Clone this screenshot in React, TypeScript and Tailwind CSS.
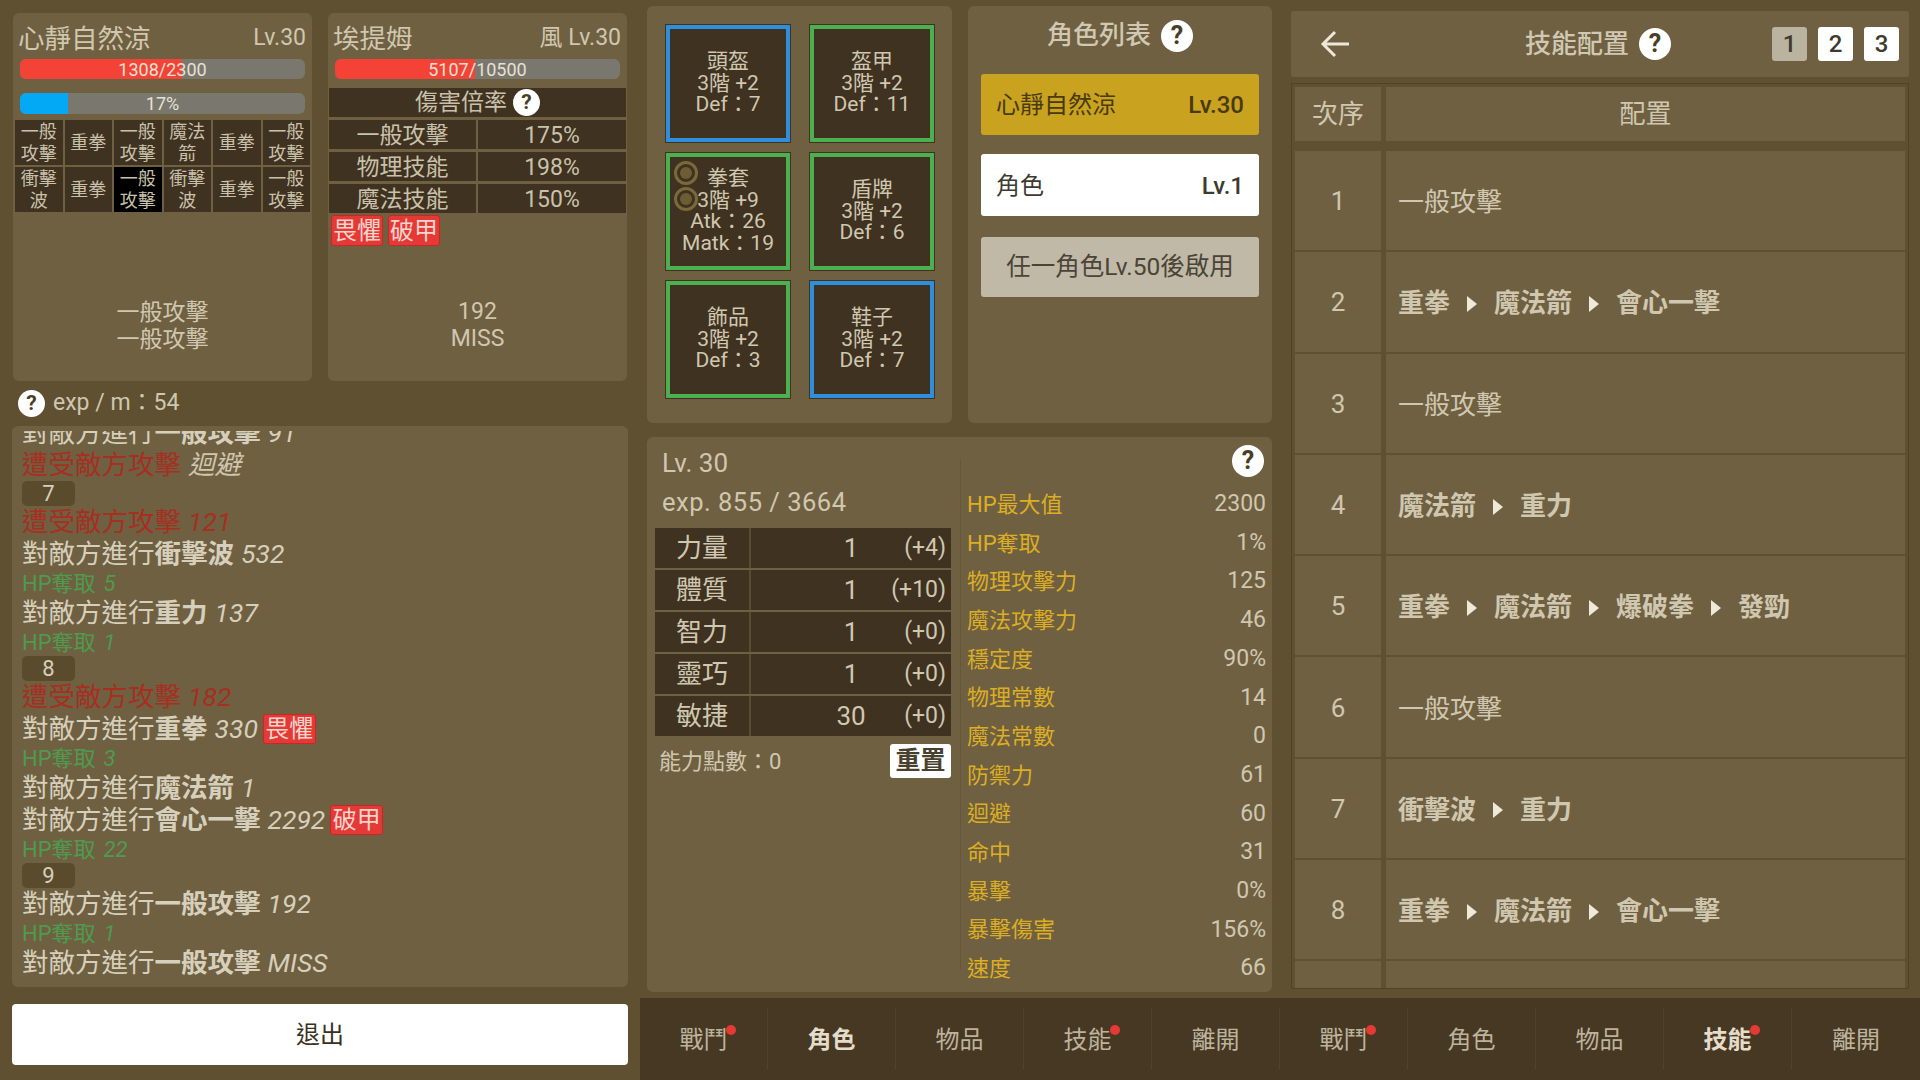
import React from "react";

const skillCells = [
  "一般攻擊", "重拳", "一般攻擊", "魔法箭", "重拳", "一般攻擊",
  "衝擊波", "重拳", "一般攻擊", "衝擊波", "重拳", "一般攻擊",
];

const attrs = [
  ["力量", "1", "(+4)"],
  ["體質", "1", "(+10)"],
  ["智力", "1", "(+0)"],
  ["靈巧", "1", "(+0)"],
  ["敏捷", "30", "(+0)"],
];

const stats = [
  ["HP最大值", "2300"], ["HP奪取", "1%"], ["物理攻擊力", "125"], ["魔法攻擊力", "46"],
  ["穩定度", "90%"], ["物理常數", "14"], ["魔法常數", "0"], ["防禦力", "61"],
  ["迴避", "60"], ["命中", "31"], ["暴擊", "0%"], ["暴擊傷害", "156%"], ["速度", "66"],
];

const skillRows = [
  ["一般攻擊"],
  ["重拳", "魔法箭", "會心一擊"],
  ["一般攻擊"],
  ["魔法箭", "重力"],
  ["重拳", "魔法箭", "爆破拳", "發勁"],
  ["一般攻擊"],
  ["衝擊波", "重力"],
  ["重拳", "魔法箭", "會心一擊"],
];

const gear = [
  { blue: true, lines: ["頭盔", "3階 +2", "Def：7"] },
  { blue: false, lines: ["盔甲", "3階 +2", "Def：11"] },
  { blue: false, lines: ["拳套", "3階 +9", "Atk：26", "Matk：19"], rings: true },
  { blue: false, lines: ["盾牌", "3階 +2", "Def：6"] },
  { blue: false, lines: ["飾品", "3階 +2", "Def：3"] },
  { blue: true, lines: ["鞋子", "3階 +2", "Def：7"] },
];

function Help({ size = "w-8 h-8 text-[25px]" }: { size?: string }) {
  return (
    <span className={`${size} inline-flex items-center justify-center rounded-full bg-white text-[#4a3d24] font-bold shrink-0`}>?</span>
  );
}

function Badge({ text }: { text: string }) {
  return (
    <span className="inline-flex items-center justify-center w-[52px] h-[31px] rounded-[3px] bg-[#e53935] border border-[#c62828] text-[#f6d5cd] text-[24px] leading-none">
      {text}
    </span>
  );
}

function Bar({ pct, color, label, h }: { pct: number; color: string; label: string; h: string }) {
  return (
    <div className={`relative ${h} w-[285px] mx-auto rounded-[6px] bg-[#7a776f] overflow-hidden`}>
      <div className={`h-full ${color}`} style={{ width: `${pct}%` }} />
      <div className="absolute inset-0 flex items-center justify-center text-[18px] text-[#e6e1d3]">{label}</div>
    </div>
  );
}

function White({ skill, val, badge }: { skill: string; val: string; badge?: string }) {
  return (
    <div className="h-[32px] flex items-center text-[26.5px] text-[#d6cfbc] whitespace-nowrap">
      對敵方進行<span className="font-bold">{skill}</span>
      <span className="italic text-[26.5px] ml-[7px]">{val}</span>
      {badge && <span className="ml-[5px] inline-flex"><span className="inline-flex items-center justify-center w-[53px] h-[30px] rounded-[3px] bg-[#e53935] border border-[#c62828] text-[#f6d5cd] text-[24px] leading-none">{badge}</span></span>}
    </div>
  );
}

function Hit({ val, light }: { val: string; light?: boolean }) {
  return (
    <div className="h-[32px] flex items-center text-[26.5px] text-[#a62f22] whitespace-nowrap">
      遭受敵方攻擊<span className={`italic text-[26.5px] ml-[7px] ${light ? "text-[#cfc7b0]" : ""}`}>{val}</span>
    </div>
  );
}

function Drain({ val }: { val: string }) {
  return <div className="h-[27px] flex items-center text-[22px] text-[#4f9a4f] whitespace-nowrap">HP奪取<span className="italic ml-[8px]">{val}</span></div>;
}

function Turn({ n }: { n: string }) {
  return (
    <div className="h-[29px] flex items-center">
      <span className="w-[53px] h-[25px] rounded-[5px] bg-[#5a4b2d] flex items-center justify-center text-[22px] text-[#d6cfbc]">{n}</span>
    </div>
  );
}

function Tab({ label, active, dot, last }: { label: string; active?: boolean; dot?: boolean; last?: boolean }) {
  return (
    <div className="w-[128px] h-full flex items-center justify-center">
      <div className={`w-full h-[62px] flex items-center justify-center pt-[2px] ${last ? "" : "border-r border-[#524229]"}`}>
        <span className={`relative text-[24px] ${active ? "font-bold text-[#e4ddca]" : "text-[#bcb39d]"}`}>
          {label}
          {dot && <span className="absolute top-[3px] -right-[8px] w-[10px] h-[10px] rounded-full bg-[#e53935]" />}
        </span>
      </div>
    </div>
  );
}

export default function App() {
  return (
    <div className="w-[1920px] h-[1080px] flex overflow-hidden bg-[#5f5031] text-[#d6cfbc] [font-family:Roboto,'Noto_Sans_CJK_TC',sans-serif]">
      {/* left column */}
      <div className="w-[640px] px-[12px] pt-[13px] shrink-0">
        <div className="flex gap-[16px] h-[368px] pl-[1px]">
          <div className="w-[299px] rounded-[6px] bg-[#6f6041] flex flex-col">
            <div className="h-[46px] flex items-center justify-between pl-[5px] pr-[6px] pt-[5px]">
              <span className="text-[26.5px] text-[#cfc7b0]">心靜自然涼</span>
              <span className="text-[23px] text-[#cfc7b0]">Lv.30</span>
            </div>
            <Bar pct={57} color="bg-[#f44336]" label="1308/2300" h="h-[20px]" />
            <div className="h-[14px]" />
            <Bar pct={17} color="bg-[#03a9f4]" label="17%" h="h-[21px]" />
            <div className="grid grid-cols-6 gap-[2px] mt-[6px] mx-[2px]">
              {skillCells.map((s, i) => (
                <div key={i} className={`h-[45px] flex items-center justify-center text-center text-[18px] leading-[22px] text-[#c9c1ab] ${i === 8 ? "bg-black" : "bg-[#3f3220]"}`}>
                  {s}
                </div>
              ))}
            </div>
            <div className="mt-[87px] text-center text-[23px] leading-[27px] text-[#cfc7b0]">
              <div>一般攻擊</div>
              <div>一般攻擊</div>
            </div>
          </div>
          <div className="w-[299px] rounded-[6px] bg-[#6f6041] flex flex-col">
            <div className="h-[46px] flex items-center justify-between pl-[5px] pr-[6px] pt-[5px]">
              <span className="text-[26.5px] text-[#cfc7b0]">埃提姆</span>
              <span className="text-[23px] text-[#cfc7b0]">風 Lv.30</span>
            </div>
            <Bar pct={49} color="bg-[#f44336]" label="5107/10500" h="h-[20px]" />
            <div className="mx-[1px] mt-[9px] h-[29px] bg-[#3f3220] flex items-center justify-center gap-[6px] pt-[2px] text-[23px] text-[#c9c1ab]">
              傷害倍率<Help size="w-[27px] h-[27px] text-[21px] -mt-[2px]" />
            </div>
            {[["一般攻擊", "175%"], ["物理技能", "198%"], ["魔法技能", "150%"]].map(([a, b]) => (
              <div key={a} className="mx-[1px] mt-[3px] flex gap-[2px] h-[29px] text-[23px] text-[#c9c1ab]">
                <div className="w-[147px] bg-[#3f3220] flex items-center justify-center pt-[3px]">{a}</div>
                <div className="flex-1 bg-[#3f3220] flex items-center justify-center pt-[3px]">{b}</div>
              </div>
            ))}
            <div className="flex gap-[5px] mt-[2px] ml-[3px]">
              <Badge text="畏懼" />
              <Badge text="破甲" />
            </div>
            <div className="mt-[52px] text-center text-[23px] leading-[27px] text-[#cfc7b0]">
              <div>192</div>
              <div>MISS</div>
            </div>
          </div>
        </div>
        <div className="h-[45px] flex items-center gap-[8px] pl-[6px] text-[23px] text-[#cfc7b0]">
          <Help size="w-[27px] h-[27px] text-[21px]" />
          exp / m：54
        </div>
        <div className="h-[561px] rounded-[6px] bg-[#6f6041] pt-[5px] pb-[8px] pl-[10px]">
          <div className="h-full overflow-hidden flex flex-col justify-end">
            <White skill="一般攻擊" val="91" />
            <Hit val="迴避" light />
            <Turn n="7" />
            <Hit val="121" />
            <White skill="衝擊波" val="532" />
            <Drain val="5" />
            <White skill="重力" val="137" />
            <Drain val="1" />
            <Turn n="8" />
            <Hit val="182" />
            <White skill="重拳" val="330" badge="畏懼" />
            <Drain val="3" />
            <White skill="魔法箭" val="1" />
            <White skill="會心一擊" val="2292" badge="破甲" />
            <Drain val="22" />
            <Turn n="9" />
            <White skill="一般攻擊" val="192" />
            <Drain val="1" />
            <White skill="一般攻擊" val="MISS" />
          </div>
        </div>
        <button className="mt-[17px] w-full h-[61px] rounded-[4px] bg-white text-[24px] text-[#3a3020]">退出</button>
      </div>

      <div className="flex-1 flex flex-col">
        <div className="h-[998px] flex">
          {/* middle column */}
          <div className="w-[625px] ml-[7px] pt-[6px] shrink-0">
            <div className="flex gap-[16px] h-[417px]">
              <div className="w-[305px] rounded-[6px] bg-[#6f6041] pt-[18px] pl-[18px]">
                <div className="grid grid-cols-[126px_126px] gap-x-[18px] gap-y-[9.5px]">
                  {gear.map((g, i) => (
                    <div key={i} className={`relative h-[118.5px] border-[5px] outline outline-1 outline-[#3f3220] -outline-offset-1 ${g.blue ? "border-[#2f8fdb]" : "border-[#4caf50]"} bg-[#3f3220] flex flex-col items-center justify-center text-[21px] leading-[21.5px] text-[#cfc7b0]`}>
                      {g.lines.map((l) => <div key={l}>{l}</div>)}
                      {g.rings && (
                        <>
                          <span className="absolute left-[4px] top-[4px] w-[24px] h-[24px] rounded-full border-[3px] border-[#7a6a3a] flex items-center justify-center"><span className="w-[12px] h-[12px] rounded-full bg-[#6d5d35]" /></span>
                          <span className="absolute left-[4px] top-[30px] w-[24px] h-[24px] rounded-full border-[3px] border-[#7a6a3a] flex items-center justify-center"><span className="w-[12px] h-[12px] rounded-full bg-[#6d5d35]" /></span>
                        </>
                      )}
                    </div>
                  ))}
                </div>
              </div>
              <div className="w-[304px] rounded-[6px] bg-[#6f6041] px-[13px]">
                <div className="h-[59px] flex items-center justify-center gap-[10px] text-[26px] font-medium text-[#d0c8b2]">
                  角色列表<Help />
                </div>
                <div className="mt-[9px] h-[61px] rounded-[3px] bg-[#c9a21f] flex items-center justify-between px-[15px] text-[24px] text-[#4a3a10]">
                  <span>心靜自然涼</span><span className="font-medium">Lv.30</span>
                </div>
                <div className="mt-[19px] h-[62px] rounded-[3px] bg-white flex items-center justify-between px-[15px] pt-[1px] text-[24px] text-[#3f3a30]">
                  <span>角色</span><span className="font-medium">Lv.1</span>
                </div>
                <div className="mt-[21px] h-[60px] rounded-[3px] bg-[#c0b9a8] flex items-center justify-center text-[24.5px] text-[#4a4436]">
                  任一角色Lv.50後啟用
                </div>
              </div>
            </div>
            <div className="mt-[14px] h-[555px] rounded-[6px] bg-[#6f6041] flex">
              <div className="w-[313px] pl-[8px] pt-[10px] shrink-0">
                <div className="pl-[7px] h-[32px] flex items-center text-[26px] text-[#cfc7b0]">Lv. 30</div>
                <div className="pl-[7px] mt-[4px] h-[38px] flex items-center text-[25.5px] tracking-[0.5px] text-[#cfc7b0]">exp. 855 / 3664</div>
                <div className="mt-[7px] w-[296px] flex flex-col gap-[2px]">
                  {attrs.map(([a, v, b]) => (
                    <div key={a} className="h-[40px] flex gap-[3px] bg-[#3f3220] text-[#cfc7b0]">
                      <div className="w-[96px] flex items-center justify-center text-[26px] border-r-2 border-[#5a4c30]">{a}</div>
                      <div className="flex-1 grid grid-cols-[130px_1fr] items-center pr-[5px]">
                        <span className="text-[26px] text-center pl-[64px]">{v}</span>
                        <span className="text-[23px] text-right">{b}</span>
                      </div>
                    </div>
                  ))}
                </div>
                <div className="mt-[8px] w-[296px] flex items-center justify-between">
                  <span className="pl-[4px] text-[22px] text-[#cfc7b0]">能力點數：0</span>
                  <span className="w-[61px] h-[34px] rounded-[3px] bg-white flex items-center justify-center text-[25px] font-bold text-[#4a4030]">重置</span>
                </div>
              </div>
              <div className="relative flex-1 border-l border-[#655738] my-[22px] pl-[6px] pr-[6px]">
                <div className="absolute right-[8px] -top-[14px]"><Help /></div>
                <div className="pt-[26px]">
                  {stats.map(([k, v]) => (
                    <div key={k} className="h-[38.7px] flex items-center justify-between text-[22px]">
                      <span className="text-[#dcae24]">{k}</span>
                      <span className="text-[#cfc7b0] text-[23px]">{v}</span>
                    </div>
                  ))}
                </div>
              </div>
            </div>
          </div>

          {/* right column */}
          <div className="w-[618px] ml-[19px] pt-[11px] shrink-0">
            <div className="h-[66px] rounded-[3px] bg-[#6f6041] flex items-center pl-[29px] pr-[10px] relative">
              <svg width="30" height="28" viewBox="0 0 30 28" fill="none" stroke="#ece7da" strokeWidth="3">
                <path d="M29 14H3M15 2L3 14l12 12" />
              </svg>
              <div className="flex-1 flex items-center justify-center gap-[10px] pl-[74px] text-[26px] font-medium text-[#d0c8b2]">
                技能配置<Help />
              </div>
              <div className="flex gap-[11px]">
                {["1", "2", "3"].map((n) => (
                  <span key={n} className={`w-[35px] h-[34px] rounded-[3px] flex items-center justify-center text-[24px] font-medium text-[#3f3a30] ${n === "1" ? "bg-[#b9b39f]" : "bg-white"}`}>{n}</span>
                ))}
              </div>
            </div>
            <div className="mt-[6px] h-[906px] border border-[#4f4226] p-[3px] bg-[#5f5031] overflow-hidden">
              <div className="flex gap-[5px] h-[54px]">
                <div className="w-[86px] bg-[#6f6041] flex items-center justify-center text-[26px] text-[#cfc7b0]">次序</div>
                <div className="flex-1 bg-[#6f6041] flex items-center justify-center text-[26px] text-[#cfc7b0]">配置</div>
              </div>
              <div className="mt-[10px] flex flex-col gap-[2px]">
                {skillRows.map((row, i) => (
                  <div key={i} className="h-[99.3px] flex gap-[5px] shrink-0">
                    <div className="w-[86px] bg-[#6f6041] flex items-center justify-center pt-[2px] text-[26px] text-[#cfc7b0]">{i + 1}</div>
                    <div className="flex-1 bg-[#6f6041] flex items-center pl-[12px] pt-[4px] text-[26px] text-[#cfc7b0]">
                      {row.map((s, j) => (
                        <React.Fragment key={j}>
                          {j > 0 && (
                            <svg width="10" height="16" viewBox="0 0 10 16" className="mx-[17px]"><path d="M0 0l10 8-10 8z" fill="#efe9da" /></svg>
                          )}
                          <span className={row.length > 1 ? "font-bold" : ""}>{s}</span>
                        </React.Fragment>
                      ))}
                    </div>
                  </div>
                ))}
                <div className="h-[40px] flex gap-[5px] shrink-0">
                  <div className="w-[86px] bg-[#6f6041]" />
                  <div className="flex-1 bg-[#6f6041]" />
                </div>
              </div>
            </div>
          </div>
        </div>

        {/* bottom tabs */}
        <div className="h-[82px] bg-[#473823] flex">
          <Tab label="戰鬥" dot />
          <Tab label="角色" active />
          <Tab label="物品" />
          <Tab label="技能" dot />
          <Tab label="離開" />
          <Tab label="戰鬥" dot />
          <Tab label="角色" />
          <Tab label="物品" />
          <Tab label="技能" active dot />
          <Tab label="離開" last />
        </div>
      </div>
    </div>
  );
}
